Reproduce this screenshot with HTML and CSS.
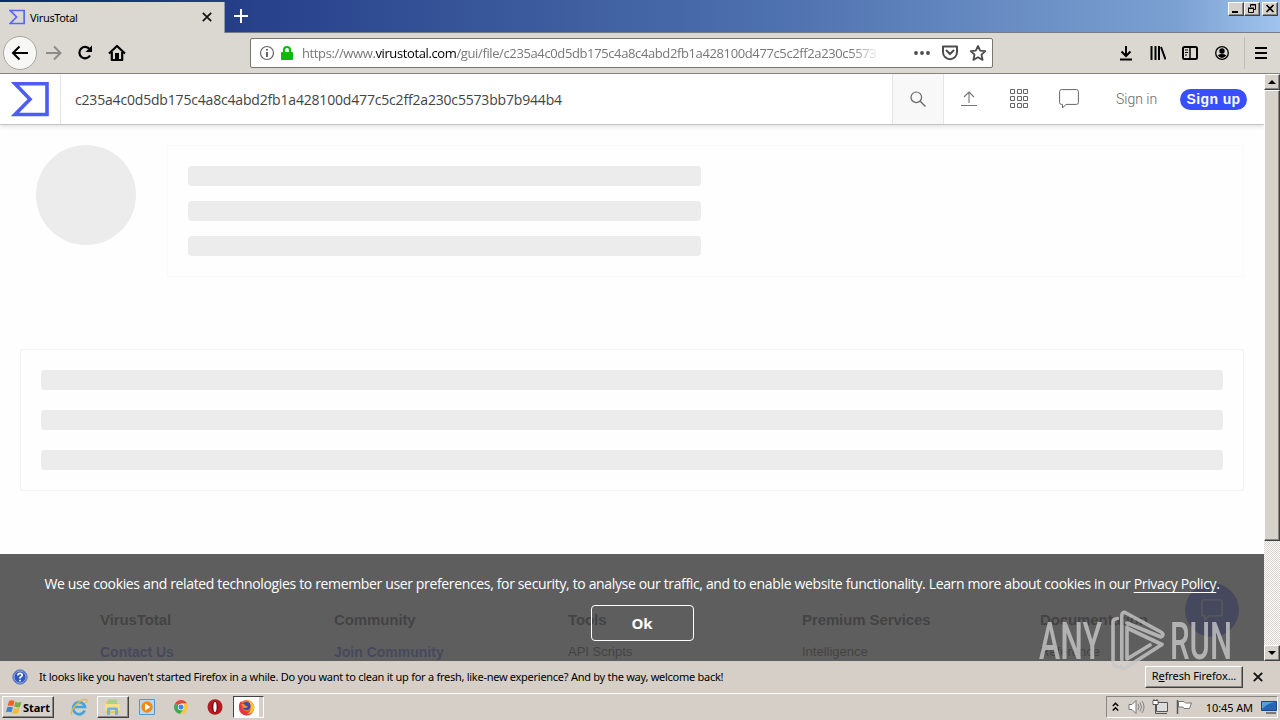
FILE: index.html
```html
<!DOCTYPE html>
<html lang="en">
<head>
<meta charset="utf-8">
<meta name="viewport" content="width=device-width, initial-scale=1.0">
<title>VirusTotal</title>
<link rel="stylesheet" href="styles.css">
</head>
<body>
<div class="titlebar">
  <div class="tab">
    <svg class="tab-logo" width="16" height="16" viewBox="0 0 38 35"><path d="M3 2H36V33H3L18 17.5Z" fill="none" stroke="#5665f2" stroke-width="4"/></svg>
    <span class="tab-title">VirusTotal</span>
    <svg width="10" height="10" viewBox="0 0 10 10"><path d="M.8.8 9.2 9.2M9.2.8.8 9.2" stroke="#111" stroke-width="1.7"/></svg>
  </div>
  <svg class="new-tab" width="14" height="14" viewBox="0 0 14 14"><path d="M7 0V14M0 7H14" stroke="#fff" stroke-width="2"/></svg>
  <div class="win-buttons">
    <span class="btn3d"><svg width="14" height="12" viewBox="0 0 14 12"><path d="M3 9H9" stroke="#000" stroke-width="2"/></svg></span>
    <span class="btn3d"><svg width="14" height="12" viewBox="0 0 14 12"><path d="M5.500 4V1.500H10.500V6.500H8.500M5 2H11M3.500 5.500H8.500V9.500H3.500ZM3 5H9" fill="none" stroke="#000"/></svg></span>
    <span class="btn3d close"><svg width="14" height="12" viewBox="0 0 14 12"><path d="M3.500 2 10.500 9M10.500 2 3.500 9" stroke="#000" stroke-width="1.600"/></svg></span>
  </div>
</div>

<div class="toolbar">
  <span class="back"><svg width="18" height="16" viewBox="0 0 18 16"><path d="M17 8H2M8.500 1.500 2 8 8.500 14.500" fill="none" stroke="#000" stroke-width="2"/></svg></span>
  <svg class="forward" width="18" height="16" viewBox="0 0 18 16"><path d="M1 8H15M9 1.500 15.500 8 9 14.500" fill="none" stroke="#8d8b87" stroke-width="2"/></svg>
  <svg class="reload" width="18" height="18" viewBox="0 0 18 18"><path d="M13.500 5A5.700 5.700 0 1 0 14 11.500" fill="none" stroke="#000" stroke-width="2.200"/><path d="M16 1.500V8H9.500Z"/></svg>
  <svg class="home" width="18" height="18" viewBox="0 0 18 18"><path d="M1 9.500 9 2 17 9.500M3.800 8V16H14.200V8" fill="none" stroke="#000" stroke-width="2.200" stroke-linejoin="round"/><path d="M7 9H11V16H7Z"/></svg>
  <div class="urlbar">
    <svg width="16" height="16" viewBox="0 0 16 16"><circle cx="8" cy="8" r="6.500" fill="none" stroke="#666" stroke-width="1.200"/><path d="M8 7V12M8 4V5.600" stroke="#555" stroke-width="1.800"/></svg>
    <svg class="lock" width="14" height="16" viewBox="0 0 14 16"><path d="M4 8V5A3 3 0 0 1 10 5V8" fill="none" stroke="#12b80c" stroke-width="2.200"/><rect x="1" y="7" width="12" height="8" rx="1" fill="#12b80c"/></svg>
    <span class="url">https://www.<b>virustotal.com</b>/gui/file/c235a4c0d5db175c4a8c4abd2fb1a428100d477c5c2ff2a230c5573</span>
    <svg class="dots" width="18" height="16" viewBox="0 0 18 16"><g fill="#4c4c4c"><circle cx="3" cy="8" r="1.900"/><circle cx="9" cy="8" r="1.900"/><circle cx="15" cy="8" r="1.900"/></g></svg>
    <svg class="pocket" width="18" height="16" viewBox="0 0 18 16"><path d="M2 1.500H16V7C16 16.500 2 16.500 2 7Z" fill="none" stroke="#4c4c4c" stroke-width="2" stroke-linejoin="round"/><path d="M5.500 5.500 9 9 12.500 5.500" fill="none" stroke="#4c4c4c" stroke-width="2" stroke-linecap="round"/></svg>
    <svg width="18" height="18" viewBox="0 0 18 18"><path d="M9 2 11.200 6.700 16.300 7.200 12.500 10.700 13.600 15.900 9 13.300 4.400 15.900 5.500 10.700 1.700 7.200 6.800 6.700Z" fill="none" stroke="#4c4c4c" stroke-width="1.800" stroke-linejoin="round"/></svg>
  </div>
  <div class="tools">
    <svg width="16" height="18" viewBox="0 0 16 18"><path d="M8 2V12M3.500 7.500 8 12 12.500 7.500M2 15.500H14" fill="none" stroke="#000" stroke-width="2"/></svg>
    <svg width="16" height="18" viewBox="0 0 16 18"><path d="M1.500 2V16M5.500 2V16M9 2V16M11 3 15.500 15.500" fill="none" stroke="#000" stroke-width="2"/></svg>
    <svg width="16" height="18" viewBox="0 0 16 18"><rect x="1" y="3" width="14" height="12" rx="1.500" fill="none" stroke="#000" stroke-width="2"/><path d="M8 3V15" stroke="#000" stroke-width="1.500"/><path d="M3 6H6M3 8.500H6M3 11H5" stroke="#000"/></svg>
    <svg width="16" height="18" viewBox="0 0 16 18"><circle cx="8" cy="9" r="6.300" fill="none" stroke="#000" stroke-width="1.300"/><circle cx="8" cy="7" r="2.700"/><path d="M3.700 11.200Q8 9 12.300 11.200Q8 17 3.700 11.200Z"/></svg>
    <span class="divider"></span>
    <svg width="14" height="18" viewBox="0 0 14 18"><path d="M1 4H13M1 9H13M1 14H13" stroke="#000" stroke-width="2"/></svg>
  </div>
</div>

<div class="viewport">
  <div class="page">
    <header class="vt-header">
      <div class="logo"><svg width="38" height="35" viewBox="0 0 38 35"><path d="M4 1.800H36V32.500H4L19 17.200Z" fill="none" stroke="#4d5df4" stroke-width="3.600"/></svg></div>
      <div class="query">c235a4c0d5db175c4a8c4abd2fb1a428100d477c5c2ff2a230c5573bb7b944b4</div>
      <div class="search"><svg width="16" height="16" viewBox="0 0 16 16"><circle cx="6.300" cy="6.300" r="5.300" fill="none" stroke="#666" stroke-width="1.200"/><path d="M10.200 10.200 15.500 15.500" stroke="#666" stroke-width="1.300"/></svg></div>
      <svg class="upload" width="16" height="16" viewBox="0 0 16 16"><path d="M8 12V1.500M3 6 8 1 13 6M0 14.500H16" fill="none" stroke="#757575" stroke-width="1.100"/></svg>
      <svg class="apps" width="20" height="20" viewBox="0 0 20 20"><path d="M1.500.5h4v4h-4zM8.500.5h4v4h-4zM14.500.5h4v4h-4zM1.500 7.500h4v4h-4zM8.500 7.500h4v4h-4zM14.500 7.500h4v4h-4zM1.500 14.500h4v4h-4zM8.500 14.500h4v4h-4zM14.500 14.500h4v4h-4z" fill="none" stroke="#666"/></svg>
      <svg class="comment" width="20" height="20" viewBox="0 0 20 20"><path d="M2.500.6H17.500Q19.400.6 19.400 2.500V13.500Q19.400 15.400 17.500 15.400H7L3.500 19V15.400H2.500Q.6 15.400.6 13.500V2.500Q.6.600 2.500.6Z" fill="none" stroke="#666"/></svg>
      <span class="signin">Sign in</span>
      <span class="signup">Sign up</span>
    </header>

    <section class="summary">
      <div class="circle"></div>
      <div class="card"><i></i><i></i><i></i></div>
    </section>
    <section class="details"><i></i><i></i><i></i></section>

    <footer>
      <div><h4>VirusTotal</h4><a class="strong">Contact Us</a></div>
      <div><h4>Community</h4><a class="strong">Join Community</a></div>
      <div><h4>Tools</h4><a>API Scripts</a></div>
      <div><h4>Premium Services</h4><a>Intelligence</a></div>
      <div><h4>Documentation</h4><a>Reference</a></div>
    </footer>
    <div class="chat"><svg width="22" height="22" viewBox="0 0 20 20"><path d="M2.500.8H17.500Q19.200.8 19.200 2.500V13.500Q19.200 15.400 17.500 15.400H7L3.500 19V15.400H2.500Q.8 15.400.8 13.500V2.500Q.8.800 2.500.8Z" fill="none" stroke="#ddd" stroke-width="1.200"/></svg></div>

    <div class="cookies">
      <p>We use cookies and related technologies to remember user preferences, for security, to analyse our traffic, and to enable website functionality. Learn more about cookies in our <u>Privacy Policy</u>.</p>
      <button>Ok</button>
    </div>
  </div>
  <div class="scrollbar">
    <span class="btn3d arrow"><svg width="8" height="4" viewBox="0 0 8 4"><path d="M0 4 4 0 8 4Z"/></svg></span>
    <span class="btn3d thumb"></span>
    <span class="btn3d arrow bottom"><svg width="8" height="4" viewBox="0 0 8 4"><path d="M0 0 4 4 8 0Z"/></svg></span>
  </div>
</div>

<div class="notice">
  <svg width="16" height="16" viewBox="0 0 16 16"><circle cx="8" cy="8" r="7.300" fill="#2f57bd" stroke="#8193b8"/><circle cx="8" cy="8" r="6" fill="none" stroke="#b4c8f2" stroke-width=".8"/><path d="M5.800 6.500Q5.900 4.300 8 4.300T10.200 6.200Q10.200 7.300 8 8.600V9.500M8 10.700V12.300" fill="none" stroke="#fff" stroke-width="1.700"/></svg>
  <span class="notice-text">It looks like you haven't started Firefox in a while. Do you want to clean it up for a fresh, like-new experience? And by the way, welcome back!</span>
  <span class="btn3d refresh">R<u>e</u>fresh Firefox...</span>
  <svg class="dismiss" width="10" height="10" viewBox="0 0 10 10"><path d="M.8.800 9.200 9.200M9.200.800.8 9.200" stroke="#111" stroke-width="1.800"/></svg>
</div>

<div class="taskbar">
  <span class="btn3d start">
    <svg width="17" height="16" viewBox="0 0 17 16"><path d="M3 2Q6 .5 8.500 2.200L7.200 7.300Q4.500 5.800 1.500 7.200Z" fill="#e8642c"/><path d="M9.500 2.700Q12 4.200 15.500 2.700L14 8Q11 9 8.200 7.600Z" fill="#72b23c"/><path d="M1.200 8.300Q4.200 7 6.900 8.500L5.500 13.500Q3 12 0 13.300Z" fill="#3f83d2"/><path d="M7.900 8.900Q10.500 10.300 13.600 9.100L12.200 14.100Q9.500 15.500 6.500 13.900Z" fill="#f3bd2d"/></svg>
    <b>Start</b>
  </span>
  <span class="task"><svg width="18" height="18" viewBox="0 0 18 18"><path d="M14.700 12.500A6 6 0 1 1 15 9H4.500" fill="none" stroke="#42a5df" stroke-width="2.700"/><path d="M2 16.500C-2 14 11-.5 16.500 1.500Q18 2.500 15.500 5" fill="none" stroke="#e5b93b" stroke-width="1.300"/></svg></span>
  <span class="task btn3d folder"><svg width="18" height="18" viewBox="0 0 18 18"><path d="M2 3H7L8 5H15V15H2Z" fill="#e8c95b"/><path d="M4 1.500H13V6H4Z" fill="#a9d08c"/><path d="M1 6H16V13H1Z" fill="#f4df8b"/><path d="M3 17V11Q3 9.500 4.500 9.500H12.500Q14 9.500 14 11V17H11V12H6V17Z" fill="#69b7e2"/></svg></span>
  <span class="task media"><svg width="16" height="16" viewBox="0 0 16 16"><path d="M.5.500H15.500V15.500H.5Z" fill="#b8d9f3" stroke="#5297cf"/><circle cx="8" cy="8" r="5.700" fill="#ef8a18"/><path d="M6 4.500 11.500 8 6 11.500Z" fill="#fff"/></svg></span>
  <span class="task chrome"><svg width="14" height="14" viewBox="0 0 14 14"><path d="M7 7 1 3.500A7 7 0 0 1 13 3.500H7Z" fill="#e14736"/><path d="M7 7 1 3.500A7 7 0 0 0 6 14L10 8.800Z" fill="#3eaa55"/><path d="M7 3.500H13A7 7 0 0 1 6 14L10 8.800Z" fill="#f9ca35"/><circle cx="7" cy="7" r="3.200" fill="#fff"/><circle cx="7" cy="7" r="2.500" fill="#4481e9"/></svg></span>
  <span class="task opera"><svg width="16" height="16" viewBox="0 0 16 16"><ellipse cx="8" cy="8" rx="7.500" ry="7.700" fill="#b51b20"/><ellipse cx="8" cy="8" rx="3.300" ry="5.800" fill="#7c0d12"/><ellipse cx="8" cy="8" rx="1.600" ry="5" fill="#fff"/></svg></span>
  <span class="task firefox"><svg width="17" height="17" viewBox="0 0 17 17"><circle cx="8.500" cy="8.700" r="7.600" fill="#f3722c"/><path d="M1 8Q1 4 3 2L5 5Q2 11 9 12.500Q14 12 13.500 6L11 2Q17 5 16 10Q14 17 8 16.500Q1 15 1 8Z" fill="#e6373e"/><path d="M10 .5Q16 4 16.500 9Q15 15 9 15Q16 11 10 .5Z" fill="#fbc532"/><circle cx="8.500" cy="7" r="4" fill="#374bb1"/><path d="M3 5Q6 4 7.500 6.500L10 7.500Q8 10 5 8.500Z" fill="#f98e27"/></svg></span>
  <div class="tray">
    <svg class="chevrons" width="7" height="10" viewBox="0 0 7 10"><path d="M.8 4 3.500 1.300 6.200 4M.8 8.500 3.500 5.800 6.200 8.500" fill="none" stroke="#000" stroke-width="1.500"/></svg>
    <svg class="sound" width="17" height="16" viewBox="0 0 17 16"><path d="M1 5.500H4L8 1.500V14.500L4 10.500H1Z" fill="#fff" stroke="#777"/><path d="M10 5Q12 8 10 11M12 3.500Q15 8 12 12.500M14 2Q18 8 14 14" fill="none" stroke="#858585"/></svg>
    <svg class="network" width="17" height="16" viewBox="0 0 17 16"><path d="M4.500 3.500H15.500V12.500H4.500Z" fill="#ddd" stroke="#555"/><path d="M7 14.500H15M1 1.500H6V5.500H1ZM3.500 6V14.500H7M2 0V2M5 0V2" fill="none" stroke="#555"/><path d="M1.500 2H5.500V5H1.500Z" fill="#fff"/></svg>
    <svg class="flag" width="17" height="16" viewBox="0 0 17 16"><path d="M2.500 2.500H8L9.500 4H15.500L13.500 9.500H8L7 8H2.500Z" fill="#fff" stroke="#777"/><path d="M1.500 1V15" stroke="#555" stroke-width="1.500"/></svg>
    <span class="clock">10:45 AM</span>
    <svg class="desktop" width="16" height="14" viewBox="0 0 16 14"><path d="M.5 1.500H15.500V10.500H.5Z" fill="#2864b5" stroke="#17498c"/><path d="M1 2H15Q6 3 1 9Z" fill="#5b9de0"/><path d="M5 13H15" stroke="#222"/></svg>
  </div>
</div>

<svg class="watermark" width="200" height="70" viewBox="0 0 200 70">
  <text x="3" y="53" textLength="63" lengthAdjust="spacingAndGlyphs">ANY</text>
  <text x="134" y="53" textLength="62" lengthAdjust="spacingAndGlyphs">RUN</text>
  <path d="M81.500 12.500Q77 12.500 77 17V56Q77 60 82 61M85.800 54V10Q86 5 90 7L125 26Q129 29 125 31L91 17M91 22 126 38.500 90 61.500Q86 64 85 60M91 21V53L114 39" fill="none" stroke="#c8c8c8" stroke-width="3.600" stroke-linecap="round" stroke-linejoin="round"/>
</svg>
</body>
</html>
```
FILE: styles.css
```css
* {
  box-sizing: border-box;
}
body {
  margin: 0;
  width: 1280px;
  height: 720px;
  overflow: hidden;
  display: flex;
  flex-direction: column;
  font-family: "Noto Sans", sans-serif;
  font-size: 11px;
  color: #000;
  background: #d6cfc8;
}
svg {
  display: block;
  flex-shrink: 0;
}
.btn3d {
  display: flex;
  align-items: center;
  justify-content: center;
  background: #d6d2cb;
  border: 1px solid;
  border-color: #fff #404040 #404040 #fff;
  box-shadow: inset -1px -1px #8b8883;
}

/* browser chrome */
.titlebar {
  height: 33px;
  display: flex;
  background: linear-gradient(90deg, #0b2a70 0, #27418a 20%, #4d70ae 60%, #7ba1d2 92%, #a0c4ee 100%);
  border-bottom: 1px solid #777d85;
}
.tab {
  width: 225px;
  height: 31px;
  margin-top: 2px;
  padding: 0 12px 1px 9px;
  display: flex;
  align-items: center;
  background: #dbd8d2;
  border-right: 1px solid #8c96ad;
}
.tab-title {
  flex: 1;
  margin-left: 5px;
  letter-spacing: -0.35px;
}
.new-tab {
  margin: 9px 0 0 9px;
}
.win-buttons {
  display: flex;
  margin: 2px 2px 0 auto;
}
.win-buttons .btn3d {
  width: 16px;
  height: 14px;
}
.win-buttons .close {
  margin-left: 2px;
}
.toolbar {
  height: 41px;
  display: flex;
  align-items: center;
  background: #dbd8d2;
  border-bottom: 1px solid #85827d;
}
.back {
  width: 34px;
  height: 34px;
  margin-left: 3px;
  display: flex;
  align-items: center;
  justify-content: center;
  border: 1px solid #aaa6a0;
  border-radius: 50%;
  background: #f7f7f5;
}
.forward {
  margin-left: 8px;
}
.reload {
  margin-left: 13px;
}
.home {
  margin-left: 14px;
}
.urlbar {
  width: 743px;
  height: 30px;
  margin-left: 124px;
  padding: 0 5px 0 8px;
  display: flex;
  align-items: center;
  background: #fff;
  border: 1px solid #78756f;
  border-radius: 2px;
}
.lock {
  margin: 0 8px 0 5px;
}
.url {
  width: 578px;
  overflow: hidden;
  white-space: nowrap;
  font-family: "Open Sans", sans-serif;
  font-size: 13px;
  letter-spacing: -0.38px;
  color: #777;
  -webkit-mask-image: linear-gradient(90deg, #000 95%, transparent);
  mask-image: linear-gradient(90deg, #000 95%, transparent);
}
.url b {
  color: #000;
  font-weight: 400;
}
.dots {
  margin-left: 33px;
}
.pocket {
  margin: 0 10px;
}
.tools {
  display: flex;
  align-items: center;
  gap: 16px;
  margin: 0 12px 0 auto;
}
.divider {
  width: 1px;
  height: 32px;
  margin: 0 -7px 0 -2px;
  background: #c2beb8;
}

/* page */
.viewport {
  height: 587px;
  display: flex;
}
.page {
  position: relative;
  width: 1264px;
  overflow: hidden;
  background: #fefefe;
}
.vt-header {
  height: 51px;
  display: flex;
  align-items: center;
  background: #fff;
  border-bottom: 1px solid #c6c6c6;
  box-shadow: 0 1px 5px rgba(0, 0, 0, 0.15);
}
.logo {
  width: 61px;
  height: 50px;
  padding: 8px 0 0 11px;
  border-right: 1px solid #e5e5e5;
}
.query {
  width: 831px;
  padding-left: 14px;
  font-family: "Open Sans", sans-serif;
  font-size: 14px;
  letter-spacing: -0.18px;
  color: #444;
}
.search {
  width: 52px;
  height: 50px;
  display: flex;
  align-items: center;
  justify-content: center;
  background: #f8f8f8;
  border: solid #e5e5e5;
  border-width: 0 1px;
}
.upload {
  margin-left: 17px;
}
.apps {
  margin-left: 32px;
}
.comment {
  margin-left: 30px;
}
.signin {
  width: 64px;
  margin-left: 37px;
  font-family: Roboto, sans-serif;
  font-weight: 300;
  font-size: 14px;
  color: #666;
}
.signup {
  width: 67px;
  height: 21px;
  line-height: 21px;
  border-radius: 11px;
  text-align: center;
  white-space: nowrap;
  background: #394eff;
  color: #fff;
  font-family: "Liberation Sans", sans-serif;
  font-size: 14px;
  font-weight: bold;
  letter-spacing: 0.4px;
}
.summary {
  display: flex;
  gap: 31px;
  padding: 20px 20px 0 36px;
}
.circle {
  width: 100px;
  height: 100px;
  border-radius: 50%;
  background: #ececec;
}
.card {
  flex: 1;
  height: 132px;
  padding: 20px;
  display: flex;
  flex-direction: column;
  gap: 15px;
  border: 1px solid #fafafa;
}
.card i, .details i {
  height: 20px;
  border-radius: 4px;
  background: #ececec;
}
.card i {
  width: 513px;
}
.details {
  margin: 72px 20px 0;
  height: 142px;
  padding: 20px;
  display: flex;
  flex-direction: column;
  gap: 20px;
  border: 1px solid #f3f3f3;
}
footer {
  display: grid;
  grid-template-columns: 234px 234px 234px 238px 200px;
  padding: 120px 0 0 100px;
  font-family: "Liberation Sans", sans-serif;
  color: #222;
}
footer h4 {
  margin: 0 0 14px;
  font-size: 15px;
  line-height: 18px;
  letter-spacing: -0.1px;
}
footer a {
  display: block;
  font-size: 13px;
  line-height: 18px;
}
footer .strong {
  font-size: 14px;
  font-weight: bold;
  color: #394eff;
}
.chat {
  position: absolute;
  right: 25px;
  bottom: 24px;
  width: 54px;
  height: 54px;
  display: flex;
  align-items: center;
  justify-content: center;
  border-radius: 50%;
  background: #394eff;
}
.cookies {
  position: absolute;
  left: 0;
  bottom: 0;
  width: 100%;
  height: 107px;
  display: flex;
  flex-direction: column;
  align-items: center;
  background: rgba(72, 72, 72, 0.88);
  color: #fff;
}
.cookies p {
  margin: 20px 0 11px;
  line-height: 20px;
  font-family: "Open Sans", sans-serif;
  font-size: 14px;
  letter-spacing: -0.35px;
  white-space: nowrap;
}
.cookies u {
  text-underline-offset: 3px;
}
.cookies button {
  width: 103px;
  height: 36px;
  margin-left: 20px;
  border: 1px solid #fff;
  border-radius: 4px;
  background: none;
  color: #fff;
  font: bold 15px "Open Sans", sans-serif;
}
.scrollbar {
  width: 16px;
  display: flex;
  flex-direction: column;
  background: repeating-conic-gradient(#fff 0 25%, #d6d2cb 0 50%) 0 0 / 2px 2px;
}
.arrow {
  height: 16px;
}
.thumb {
  height: 451px;
}
.bottom {
  margin-top: auto;
}

/* notification bar */
.notice {
  height: 33px;
  display: flex;
  align-items: center;
  padding: 0 17px 1px 12px;
  border-bottom: 1px solid #fff;
}
.notice-text {
  margin-left: 11px;
  white-space: nowrap;
  letter-spacing: -0.27px;
}
.refresh {
  width: 98px;
  height: 22px;
  margin-left: auto;
  padding-bottom: 2px;
  white-space: pre;
  letter-spacing: -0.1px;
}
.dismiss {
  margin-left: 10px;
}

/* taskbar */
.taskbar {
  height: 26px;
  display: flex;
  align-items: center;
}
.start {
  width: 52px;
  height: 22px;
  margin: 0 9px 0 2px;
  font-size: 11px;
}
.task {
  width: 32px;
  height: 22px;
  margin-right: 1px;
  display: flex;
  align-items: center;
  justify-content: center;
}
.folder {
  margin-left: 1px;
}
.media {
  margin-left: 1px;
}
.chrome {
  margin-left: 1px;
}
.opera {
  margin-left: 1px;
}
.firefox {
  width: 31px;
  margin-left: 1px;
  padding-right: 4px;
  background: #fff;
  border: 1px solid;
  border-color: #444 #fff #fff #444;
  box-shadow: inset -4px 0 #d6cfc8;
}
.tray {
  width: 172px;
  height: 22px;
  margin: 0 2px 0 auto;
  padding-left: 5px;
  display: flex;
  align-items: center;
  border: 1px solid;
  border-color: #8b8883 #fff #fff #8b8883;
}
.sound {
  margin-left: 9px;
}
.network, .flag {
  margin-left: 7px;
}
.clock {
  margin-left: auto;
  white-space: nowrap;
  letter-spacing: -0.1px;
}
.desktop {
  margin-left: 8px;
}
.watermark {
  position: absolute;
  left: 1036px;
  top: 606px;
  fill: #c8c8c8;
  font: 500 51px Roboto, sans-serif;
  opacity: 0.8;
}
```
